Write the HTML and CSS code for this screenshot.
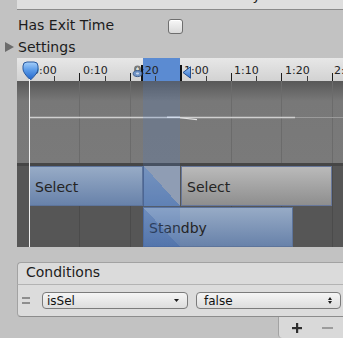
FILE: index.html
```html
<!DOCTYPE html>
<html>
<head>
<meta charset="utf-8">
<link rel="stylesheet" href="styles.css">
</head>
<body>
<div class="inspector">
  <div class="top-panel"><span class="top-title">Select -&gt; Standby</span></div>

  <div class="row exit-row">
    <span class="label">Has Exit Time</span>
    <span class="checkbox"></span>
  </div>

  <div class="row settings-row">
    <span class="foldout"></span>
    <span>Settings</span>
  </div>

  <div class="timeline">
    <div class="ruler">
      <div class="col-ruler"></div>
      <span class="tick major" style="left:12px"></span>
      <span class="tick major" style="left:62px"></span>
      <span class="tick major" style="left:113px"></span>
      <span class="tick major" style="left:163px"></span>
      <span class="tick major" style="left:214px"></span>
      <span class="tick major" style="left:264px"></span>
      <span class="tick major" style="left:315px"></span>
      <span class="tick minor" style="left:37px"></span>
      <span class="tick minor" style="left:88px"></span>
      <span class="tick minor" style="left:138px"></span>
      <span class="tick minor" style="left:189px"></span>
      <span class="tick minor" style="left:239px"></span>
      <span class="tick minor" style="left:290px"></span>
      <span class="ruler-label" style="left:15px">0:00</span>
      <span class="ruler-label" style="left:66px">0:10</span>
      <span class="ruler-label" style="left:117px">0:20</span>
      <span class="ruler-label" style="left:167px">1:00</span>
      <span class="ruler-label" style="left:217px">1:10</span>
      <span class="ruler-label" style="left:268px">1:20</span>
      <span class="ruler-label" style="left:317px">2:00</span>

      <span class="marker-line marker-line-left"></span>
      <span class="marker-line marker-line-right"></span>
      <svg class="trans-icon-left" width="11" height="13" viewBox="0 0 11 13">
        <circle cx="5.5" cy="4" r="2.6" fill="none" stroke="#7a7a7a" stroke-width="1.6"/>
        <ellipse cx="5.5" cy="8.6" rx="4.3" ry="3" fill="#6f93c6" stroke="#3f5f8e" stroke-width="1"/>
        <ellipse cx="5.5" cy="8.6" rx="1.6" ry="1" fill="#c8d6ea"/>
      </svg>
      <svg class="trans-icon-right" width="10" height="13" viewBox="0 0 10 13">
        <defs>
          <linearGradient id="gr" x1="0" y1="0" x2="0" y2="1">
            <stop offset="0" stop-color="#9cc6f4"/>
            <stop offset="1" stop-color="#2f6fcf"/>
          </linearGradient>
        </defs>
        <path d="M8.5 0.8 V12.2 L1 6.5 Z" fill="url(#gr)" stroke="#244f8f" stroke-width="1" stroke-linejoin="round"/>
      </svg>
      <svg class="playhead" width="17" height="20" viewBox="0 0 17 20">
        <defs>
          <linearGradient id="pg" x1="0" y1="0" x2="0" y2="1">
            <stop offset="0" stop-color="#a6d0fa"/>
            <stop offset="0.45" stop-color="#5b9be8"/>
            <stop offset="1" stop-color="#1f63c9"/>
          </linearGradient>
        </defs>
        <path d="M1 5 Q1 1 5 1 H12 Q16 1 16 5 V8 Q16 12 8.5 19 Q1 12 1 8 Z" fill="url(#pg)" stroke="#2a5a9f" stroke-width="1"/>
      </svg>
    </div>

    <div class="curves">
      <span class="grid-line" style="left:62px"></span>
      <span class="grid-line" style="left:113px"></span>
      <span class="grid-line" style="left:214px"></span>
      <span class="grid-line" style="left:264px"></span>
      <span class="grid-line" style="left:315px"></span>
      <svg class="curve-svg" width="326" height="82" viewBox="0 0 326 82">
        <line x1="12" y1="36.5" x2="278" y2="36.5" stroke="#cfcfcf" stroke-width="1.3"/>
        <line x1="278" y1="36.5" x2="326" y2="36.5" stroke="#9b9b9b" stroke-width="1.2"/>
        <line x1="150" y1="36.3" x2="163" y2="36.3" stroke="#f4f4f4" stroke-width="1.4"/>
        <line x1="163" y1="36.8" x2="180" y2="38.6" stroke="#e2e2e2" stroke-width="1.1"/>
      </svg>
    </div>

    <div class="sep"></div>

    <div class="tracks">
      <span class="grid-line dark" style="left:62px"></span>
      <span class="grid-line dark" style="left:113px"></span>
      <span class="grid-line dark" style="left:214px"></span>
      <span class="grid-line dark" style="left:264px"></span>
      <span class="grid-line dark" style="left:315px"></span>

      <div class="clip clip-blue row-1" style="left:12px;width:114px">Select</div>
      <div class="trans-cell row-1" style="left:126px;width:37px"></div>
      <div class="clip clip-gray row-1" style="left:164px;width:151px">Select</div>
      <div class="clip clip-blue row-2" style="left:126px;width:150px">Standby</div>
      <div class="trans-cell-low row-2" style="left:126px;width:37px"></div>
    </div>

    <div class="col-overlay"></div>
    <div class="playhead-line"></div>
  </div>

  <div class="conditions">
    <div class="cond-header">Conditions</div>
    <div class="cond-body">
      <span class="handle"></span>
      <div class="popup popup-param">
        <span>isSel</span>
        <svg width="5" height="3" viewBox="0 0 5 3"><path d="M0 0 H5 L2.5 3 Z" fill="#1a1a1a"/></svg>
      </div>
      <div class="popup popup-value">
        <span>false</span>
        <svg width="4" height="7" viewBox="0 0 4 7"><path d="M0 3 H4 L2 0 Z M0 4 H4 L2 7 Z" fill="#1a1a1a"/></svg>
      </div>
    </div>
    <div class="cond-footer">
      <svg class="btn-plus" width="10" height="10" viewBox="0 0 10 10"><rect x="4" y="0" width="2.2" height="10" fill="#2e2e2e"/><rect x="0" y="4" width="10" height="2.2" fill="#2e2e2e"/></svg>
      <svg class="btn-minus" width="11" height="10" viewBox="0 0 11 10"><rect x="0" y="4" width="11" height="2" fill="#9c9c9c"/></svg>
    </div>
  </div>
</div>
</body>
</html>
```

FILE: styles.css
```css
html, body {
  margin: 0;
  padding: 0;
}

body {
  background: #c2c2c2;
  font-family: "DejaVu Sans", "Liberation Sans", sans-serif;
  color: #1e1e1e;
}

.inspector {
  width: 343px;
  height: 338px;
  overflow: hidden;
  position: relative;
}

.top-panel {
  margin-left: 17px;
  height: 9px;
  background: #dedede;
  border-bottom: 1px solid #8a8a8a;
  overflow: hidden;
}

.top-title {
  display: block;
  font-size: 14px;
  line-height: 14px;
  margin-top: -12px;
  padding-left: 117px;
  white-space: nowrap;
  color: #222;
}

.row {
  display: flex;
  align-items: center;
  font-size: 14px;
  color: #1c1c1c;
}

.exit-row {
  height: 22px;
  margin-top: 4px;
  padding-left: 18px;
}

.label {
  width: 150px;
}

.checkbox {
  width: 13px;
  height: 13px;
  border: 1px solid #6e6e6e;
  border-radius: 3px;
  background: linear-gradient(#f7f7f7, #d9d9d9);
  box-shadow: inset 0 1px 0 #ffffff;
  margin-top: 3px;
}

.settings-row {
  height: 22px;
  padding-left: 5px;
}

.foldout {
  width: 0;
  height: 0;
  border-left: 9px solid #6c6c6c;
  border-top: 5.5px solid transparent;
  border-bottom: 5.5px solid transparent;
  margin-right: 4px;
}

/* timeline */
.timeline {
  margin-left: 17px;
  width: 326px;
  height: 189px;
  position: relative;
  overflow: hidden;
  display: flex;
  flex-direction: column;
}

.ruler {
  height: 23px;
  flex: none;
  position: relative;
  background: linear-gradient(#e7e7e7, #d2d2d2);
}

.col-ruler {
  position: absolute;
  left: 126px;
  width: 37px;
  top: 0;
  bottom: 0;
  background: #5b8bd2;
}

.tick {
  position: absolute;
  bottom: 0;
  width: 1px;
  background: #1c1c1c;
}

.tick.major {
  height: 8px;
}

.tick.minor {
  height: 5px;
  background: #3c3c3c;
}

.ruler-label {
  position: absolute;
  top: 7px;
  font-size: 11px;
  line-height: 1;
  color: #222;
  white-space: nowrap;
}

.marker-line {
  position: absolute;
  top: 7px;
  bottom: 0;
  width: 2px;
  background: #111;
}

.marker-line-left {
  left: 124px;
}

.marker-line-right {
  left: 163px;
}

.trans-icon-left {
  position: absolute;
  left: 115px;
  top: 7px;
}

.trans-icon-right {
  position: absolute;
  left: 165px;
  top: 8px;
}

.playhead {
  position: absolute;
  left: 5px;
  top: 3px;
}

.curves {
  height: 82px;
  flex: none;
  position: relative;
  background: linear-gradient(#585858, #787878 20px, #7a7a7a);
}

.grid-line {
  position: absolute;
  top: 0;
  bottom: 0;
  width: 1px;
  background: #6b6b6b;
}

.grid-line.dark {
  background: #4b4b4b;
}

.curve-svg {
  position: absolute;
  left: 0;
  top: 0;
}

.sep {
  height: 3px;
  flex: none;
  background: #464646;
}

.tracks {
  height: 81px;
  flex: none;
  position: relative;
  background: #565656;
}

.row-1 {
  top: 0;
  height: 40px;
}

.row-2 {
  top: 41px;
  height: 40px;
}

.clip {
  position: absolute;
  box-sizing: border-box;
  display: flex;
  align-items: center;
  padding: 1px 0 0 5px;
  font-size: 14px;
  color: #242424;
  white-space: nowrap;
  overflow: hidden;
}

.clip-blue {
  background: linear-gradient(#97abc6, #6882aa);
  border: 1px solid #5d749b;
}

.clip-gray {
  background: linear-gradient(#bababa, #8e8e8e);
  border: 1px solid #67779a;
}

.trans-cell {
  position: absolute;
  box-sizing: border-box;
  border-left: 1px solid #4d6186;
  background:
    linear-gradient(to top right, transparent 50%, #a1a5ae 50%),
    linear-gradient(#8199bc, #6583b0);
}

.trans-cell-low {
  position: absolute;
  box-sizing: border-box;
  background: linear-gradient(to top right, rgba(40, 80, 150, 0.28) 50%, transparent 50%);
}

.col-overlay {
  position: absolute;
  left: 126px;
  width: 37px;
  top: 23px;
  bottom: 0;
  background: rgba(75, 125, 205, 0.2);
}

.playhead-line {
  position: absolute;
  left: 12px;
  top: 21px;
  bottom: 0;
  width: 1px;
  background: #efefef;
}

/* conditions */
.conditions {
  margin: 15px 0 0 17px;
  width: 326px;
}

.cond-header {
  height: 21px;
  box-sizing: content-box;
  border-top: 1px solid #a2a2a2;
  border-left: 1px solid #a2a2a2;
  border-bottom: 1px solid #b3b3b3;
  border-radius: 4px 0 0 0;
  background: #dbdbdb;
  font-size: 14px;
  padding: 0 0 3px 8px;
  height: 18px;
  display: flex;
  align-items: center;
  color: #1c1c1c;
}

.cond-body {
  height: 31px;
  background: #dcdcdc;
  border-left: 1px solid #a2a2a2;
  border-bottom: 1px solid #8c8c8c;
  border-radius: 0 0 0 4px;
  display: flex;
  align-items: center;
  padding-left: 4px;
}

.handle {
  width: 8px;
  height: 3px;
  border-top: 2px solid #8e8e8e;
  border-bottom: 2px solid #8e8e8e;
  margin-right: 12px;
}

.popup {
  box-sizing: border-box;
  height: 17px;
  border: 1px solid #7b7b7b;
  border-radius: 4px;
  background: linear-gradient(#f5f5f5, #dddddd);
  display: flex;
  align-items: center;
  justify-content: space-between;
  font-size: 12px;
  color: #111;
}

.popup-param {
  width: 146px;
  padding: 0 8px 0 4px;
  margin-right: 8px;
}

.popup-value {
  width: 145px;
  padding: 0 8px 0 7px;
}

.cond-footer {
  margin-left: 261px;
  width: 64px;
  height: 21px;
  background: #d9d9d9;
  border-left: 1px solid #a2a2a2;
  border-radius: 0 0 0 4px;
  display: flex;
  align-items: center;
  padding-left: 13px;
  box-sizing: border-box;
  width: 65px;
  gap: 20px;
}
```
